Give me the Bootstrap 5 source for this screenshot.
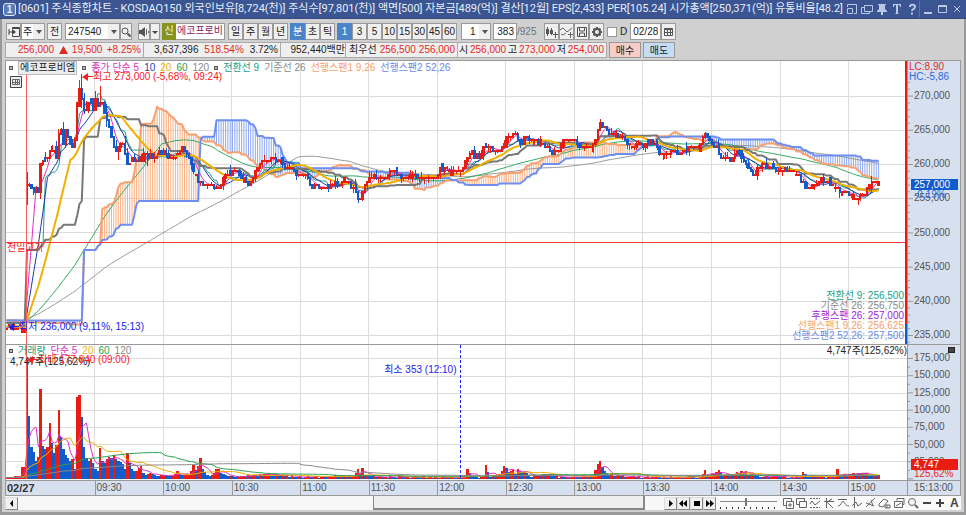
<!DOCTYPE html>
<html lang="ko">
<head>
<meta charset="utf-8">
<meta name="viewport" content="width=device-width, initial-scale=1">
<title>[0601] 주식종합차트</title>
<link rel="stylesheet" href="https://cdn.jsdelivr.net/npm/bootstrap@5.3.0/dist/css/bootstrap.min.css">
<style>
body{font:10px/14px "Liberation Sans","Noto Sans CJK KR",sans-serif;background:#d0d0d0;color:#222;min-height:480px}
button,input,select{font:inherit;color:inherit}
.titlebar{height:19px;background:#3a5592;color:#e8eefa;padding:0 2px 0 3px;gap:2px;border-bottom:1px solid #334a80}
.titlebar h1{font:11px/18px Roboto,"Noto Sans CJK KR",sans-serif;word-break:keep-all;min-width:0}
.logo{width:13px;height:13px;flex:none;border:1px solid #dfe8f8;border-radius:3px;background:#587cb8;font-weight:bold;line-height:11px}
.winbtn{border:0;background:none;width:15px;height:16px;padding:1px;color:#b9c8e4}
.frame{border:solid #999;border-width:0 2px 3px 2px;padding:4px 3px 2px;min-height:0}
.tools{height:17px;padding-left:1px}
.tb{border:1px solid #999;background:#efefef;height:17px;width:15px;padding:0;line-height:14px;text-align:center;flex:none}
.tb svg,.drw svg,.winbtn svg{display:block;margin:auto}
.tb.on{background:#4a83c8;border-color:#4a83c8;color:#fff}
.tb.sin{background:#84941c;border-color:#84941c;color:#fff;width:14px}
.fld{border:1px solid #999;background:#fff;height:17px;padding:0 2px;border-radius:0;flex:none}
.drop{appearance:none;background:#fff linear-gradient(#efefef,#efefef) right/11px 100% no-repeat;padding-right:10px}
.dropwrap{position:relative;flex:none;display:flex}
.dropwrap::after{content:"";position:absolute;right:3px;top:7px;border:3px solid transparent;border-top:4px solid #555;border-bottom:0;pointer-events:none}
.stock{width:49px;color:#8a1c62;white-space:nowrap}
.info{height:16px;margin-top:2px;margin-bottom:2px}
.cell{border:1px solid #aaa;border-left-width:0;background:#efefef;height:16px;line-height:14px;white-space:nowrap;flex:none}
.c1{width:139px;padding:0 2px 0 12px;border-left-width:1px}.c2{width:137px;padding:0 2px 0 10px}.c3{width:65px}.c4{width:112px;padding:0 2px 0 3px}.c5{width:149px;padding:0 2px 0 1px}
.up{color:#e4281c}
.ord{width:32px;height:16px;border:1px solid #999;padding:0;line-height:13px;margin-left:2px}
.buy{background:#f6cdc8}.sell{background:#c4dcf4}
.chart{border:1px solid #999;border-bottom:0;background:#fff;min-height:0}
.pane{min-height:0;flex-basis:0;display:flex}
.price{flex-grow:283}.volume{flex-grow:135;border-top:1px solid #999}
.plot{position:relative;flex:1 1 0;min-width:0;overflow:hidden}
.plot>svg,.scale>svg{position:absolute;left:0;top:0;width:100%;height:100%;display:block}
.scale{width:53px;flex:none;background:#d6e0ef;border-left:1px solid #999;position:relative;color:#555;display:flex;flex-direction:column;justify-content:space-between;line-height:12px;overflow:hidden}
.scale .lab{padding-left:6px;position:relative}
.price .scale{padding:29px 0 3px}.volume .scale{padding:7px 0 12px}
.note{position:absolute;white-space:nowrap;line-height:12px}
.legend{gap:5px;left:3px;top:0}
.bx{width:4px;height:4px;border:1px solid #555;background:#bbb;flex:none;display:inline-block}
.tag{background:#ececec;border:1px solid #bbb;line-height:12px;padding:0 1px}
.sums{right:3px;bottom:3px;line-height:10px;text-align:right}
.arw::before{content:"";display:inline-block;border:4px solid transparent;border-right:6px solid;border-left:0;vertical-align:-1px}
.arw i{display:inline-block;width:5px;height:1px;background:currentColor;vertical-align:3px}
.m{color:#e030c0}.n{color:#1c3ca8}.g{color:#e8b020}.gr{color:#28a050}.gy{color:#888}.te{color:#18a088}.or{color:#f8a068}.bl{color:#6888e8}.pu{color:#a020e0}.rd{color:#fa2020}.bb{color:#2020f0}.hc{color:#2868d8}
.times{display:flex;height:16px;flex:none;background:#d6e0ef;border-top:1px solid #999;border-bottom:1px solid #999;color:#555;line-height:14px}
.tgrid{display:grid;grid-template-columns:177fr repeat(11,137fr) 117fr;flex:1 1 0}
.tgrid span+span{border-left:1px solid #999;padding-left:1px}
.tgrid .day{font-size:11px;padding-left:1px;color:#333}
.now{width:53px;border-left:1px solid #999;padding-left:6px}
.foot{height:14px;flex:none;background:#fafafa}
.track{flex:1 1 0;height:14px;display:flex;background:#f7f7f7}
.thumb{margin-left:55%;width:42%;height:14px;background:#eee;border:solid #888;border-width:0 2px 2px 1px;padding:0}
.nav2{width:13px;height:13px;border:1px solid #888;border-color:#ddd #888 #888 #ddd;background:#f0f0f0;padding:0;flex:none;color:#000}
.nav2 svg{display:block;margin:auto}
.speed{appearance:none;width:57px;height:14px;margin:0 4px;background:linear-gradient(#888,#888) 0 5px/100% 1px no-repeat,repeating-linear-gradient(90deg,#333 0 1px,transparent 1px 6px) 0 11px/100% 2px no-repeat;flex:none}
.speed::-webkit-slider-thumb{appearance:none;width:2px;height:8px;background:#777;margin-top:-3px}
.draws{width:180px;flex:none}
.drw{border:0;background:none;padding:0;width:13px;height:14px;color:#666}
.drw.txt{font-size:12px;color:#444}
.mark-now{position:absolute;left:3px;right:2px;background:#105ccc;color:#fff;line-height:11px;padding-left:3px}
.mini{position:absolute;right:5px;top:2px;width:7px;height:6px;background:#444;border:1px solid #222;padding:0}
#kind{width:24px;padding-left:1px}#prev{margin-left:2px}#codebox{margin-left:3px}#code{width:55px}#find{width:12px}
#snd{margin-left:6px;width:12px}#sndo{width:10px;margin-right:2px}#nm{border-left:0;margin-right:3px;padding:0 1px}#min,#u1{margin-left:2px}#unit{width:30px}
#cnt{width:24px;margin-left:2px}#tot{width:27px;line-height:17px}#dl{gap:3px;margin:0 3px}#dchk{width:10px;height:10px;appearance:none}#date{width:31px}
#gridIcon{left:4px;top:15px;width:12px;height:12px}
#hi{left:76px;top:10px}#ph{left:1px;top:64%}#lo{left:2px;top:92%}
#v1{left:4px;top:11px}#vmax{left:21px;top:9px}#vmin{right:50%;top:19px}#v2{right:0;top:0}
#lc{left:1px;top:1px;line-height:10px}#cur{top:118px}#chg{left:6px;top:128px}
#vcur{background:#e81c10;top:114px;left:3px}#vchg{left:6px;top:123px}
</style>
<script src="https://cdn.jsdelivr.net/npm/bootstrap@5.3.0/dist/js/bootstrap.bundle.min.js"></script>
</head>
<body class="d-flex flex-column vh-100 overflow-hidden">
<header class="titlebar d-flex align-items-center flex-shrink-0">
  <span class="logo text-center">1</span>
  <h1 class="m-0 flex-grow-1 text-nowrap">[0601] 주식종합차트 - KOSDAQ150 외국인보유[8,724(천)] 주식수[97,801(천)] 액면[500] 자본금[489(억)] 결산[12월] EPS[2,433] PER[105.24] 시가총액[250,371(억)] 유통비율[48.2]</h1>
  <div class="d-flex flex-shrink-0">
    <button class="winbtn" aria-label="도킹"><svg width="12" height="12" fill="none" stroke="currentColor"><path d="M1.5 4V1.5h9v9H8M1.5 5.500h5v5h-5z"/></svg></button>
    <button class="winbtn" aria-label="복제"><svg width="12" height="12" fill="none" stroke="currentColor"><path d="M3.500 2.500h8v6h-8zM3 4.500H.5v6h8V9"/></svg></button>
    <button class="winbtn" aria-label="고정"><svg width="12" height="12" fill="currentColor"><path d="M2 1h8v1H9v4l2 2v1H1V8l2-2V2H2zM5 9h2v3H5z"/></svg></button>
    <button class="winbtn" aria-label="글꼴"><svg width="12" height="12" fill="currentColor"><path d="M2 1h8v3H9L8.500 2H7v8l1 1H4l1-1V2H3.500L3 4H2z"/></svg></button>
    <button class="winbtn fw-bold" aria-label="도움말"><svg width="12" height="12" fill="none" stroke="currentColor" stroke-width="2"><path d="M4 4c0-3 5-3 5 0 0 2-3 2-3 4M6 9.500v2"/></svg></button>
    <button class="winbtn border-start border-secondary" aria-label="최소화"><svg width="12" height="12" fill="currentColor"><path d="M3 9h8v2H3z"/></svg></button>
    <button class="winbtn" aria-label="최대화"><svg width="12" height="12" fill="none" stroke="currentColor"><path d="M2.500 2.500h8v7h-8zM2 3.500h9"/></svg></button>
    <button class="winbtn" aria-label="닫기"><svg width="12" height="12" fill="none" stroke="currentColor"><path d="M3 3l6 6M9 3l-6 6"/></svg></button>
  </div>
</header>
<main class="frame d-flex flex-column flex-grow-1">
  <div class="tools d-flex flex-shrink-0">
    <button class="tb" aria-label="패널"><svg width="12" height="12" fill="none" stroke="#444"><path d="M4.500 3V1.500h7v9h-7V9M4 2.500h8M1 3v6M1 6h4"/><path d="M4 3l4 3-4 3z" fill="#444" stroke="none"/></svg></button>
    <span class="dropwrap"><select class="fld drop" aria-label="종류" id="kind"><option>주</option></select></span>
    <button class="tb" id="prev">전</button>
    <span class="dropwrap" id="codebox"><input class="fld drop" aria-label="종목코드" value="247540" id="code"></span>
    <button class="tb" aria-label="검색" id="find"><svg width="10" height="12" fill="none" stroke="#555"><circle cx="4" cy="5" r="3"/><path d="M6.500 7.500l3 3" stroke-width="2"/></svg></button>
    <button class="tb" aria-label="소리" id="snd"><svg width="10" height="12" fill="#555"><path d="M0 4h2l4-3v10L2 8H0z"/><path d="M7.500 3v6M9.500 5v2" stroke="#666"/></svg></button>
    <button class="tb" aria-label="소리 옵션" id="sndo"><svg width="8" height="12" fill="#444"><path d="M1 5h6L4 8z"/></svg></button>
    <span class="tb sin">신</span>
    <span class="fld stock" id="nm">에코프로비</span>
    <button class="tb">일</button><button class="tb">주</button><button class="tb">월</button><button class="tb">년</button>
    <button class="tb on" id="min">분</button><button class="tb">초</button><button class="tb">틱</button>
    <button class="tb on" id="u1">1</button><button class="tb">3</button><button class="tb">5</button><button class="tb">10</button><button class="tb">15</button><button class="tb">30</button><button class="tb">45</button><button class="tb">60</button>
    <span class="dropwrap ms-1"><select class="fld drop ps-2" aria-label="분 단위" id="unit"><option>1</option></select></span>
    <input class="fld text-end" aria-label="표시 개수" value="383" id="cnt"><span class="text-secondary" id="tot">/925</span>
    <button class="tb" aria-label="봉 추가"><svg width="13" height="12" fill="#555"><path d="M1 3h3v5H1zM2 1h1v9H2zM5 4h3v4H5zM6 2h1v7H6zM10 6h1v2h2v1h-2v3h-1V9H8V8h2z"/></svg></button>
    <button class="tb" aria-label="지표 추가"><svg width="13" height="12" fill="none" stroke="#666"><path d="M0 4l3-2 4 4 5-4M1 8l2 1 3-2M10.500 6v6M8 8.500h5"/></svg></button>
    <button class="tb" aria-label="저장"><svg width="12" height="12" fill="none" stroke="#555"><path d="M1.500 1.500h9v9h-9zM3.500 2v3h5V2M3.500 10V7h5v3"/></svg></button>
    <button class="tb" aria-label="설정"><svg width="12" height="12" fill="none" stroke="#555"><circle cx="6" cy="6" r="3" stroke-width="2"/><path d="M6 1v2M6 9v2M1 6h2M9 6h2M2.500 2.500l1 1M8.500 8.500l1 1M2.500 9.500l1-1M8.500 3.500l1-1" stroke-width="2"/></svg></button>
    <label class="d-flex align-items-center" id="dl"><input type="checkbox" class="fld" id="dchk">D</label>
    <input class="fld" aria-label="날짜" value="02/28" id="date"><button class="tb" aria-label="달력"><svg width="11" height="12" fill="none" stroke="#555"><path d="M1.500 2.500h8v7h-8zM1 3.500h9M4.500 4v5M7.500 4v5M2 6.500h8"/></svg></button>
  </div>
  <div class="info d-flex flex-shrink-0">
    <div class="cell c1 d-flex justify-content-between up"><span>256,000</span><svg width="9" height="14" fill="#e4281c"><path d="M0 11h9L4.500 3z"/></svg><span>19,500</span><span>+8.25%</span></div>
    <div class="cell c2 d-flex justify-content-between"><span>3,637,396</span><span class="up">518.54%</span><span>3.72%</span></div>
    <div class="cell c3 text-end">952,440백만</div>
    <div class="cell c4 d-flex justify-content-between"><span>최우선</span><span class="up">256,500</span><span class="up">256,000</span></div>
    <div class="cell c5 d-flex justify-content-between"><span>시</span><span class="up">256,000</span><span>고</span><span class="up">273,000</span><span>저</span><span class="up">254,000</span></div>
    <button class="ord buy">매수</button><button class="ord sell">매도</button>
  </div>
  <section class="chart d-flex flex-column flex-grow-1">
    <div class="pane price">
      <div class="plot">
        <svg id="priceSvg" viewBox="6 61 901 283" preserveAspectRatio="none" aria-label="가격 차트"></svg>
        <div class="note legend d-flex align-items-center"><i class="bx"></i><span class="tag">에코프로비엠</span><i class="bx"></i><span class="m">종가 단순 5</span><span class="n">10</span><span class="g">20</span><span class="gr">60</span><span class="gy">120</span><i class="bx"></i><span class="te">전환선 9</span><span class="gy">기준선 26</span><span class="or">선행스팬1 9,26</span><span class="bl">선행스팬2 52,26</span></div>
        <svg class="note" id="gridIcon" viewBox="0 0 12 12"><path d="M.5.5h11v11H.5z" fill="#eee" stroke="#444"/><path d="M2.500 3.500h7v5h-7zM5.500 3v6M7.500 3v6M2 6.500h8" fill="none" stroke="#666"/></svg>
        <div class="note arw rd" id="hi"><i></i>최고 273,000 (-5,68%, 09:24)</div>
        <div class="note rd" id="ph">전일고가</div>
        <div class="note arw bb" id="lo"><i></i>최저 236,000 (9,11%, 15:13)</div>
        <div class="note sums"><div class="te">전환선 9: 256,500</div><div class="gy">기준선 26: 256,750</div><div class="pu">후행스팬 26: 257,000</div><div class="or">선행스팬1 9,26: 256,625</div><div class="bl">선행스팬2 52,26: 257,500</div></div>
      </div>
      <div class="scale"><svg id="pt" viewBox="0 61 52 283" preserveAspectRatio="none"></svg>
        <div class="note" id="lc"><div class="up">LC:8,90</div><div class="hc">HC:-5,86</div></div>
        <span class="lab">270,000</span><span class="lab">265,000</span><span class="lab">260,000</span><span class="lab">255,000</span><span class="lab">250,000</span><span class="lab">245,000</span><span class="lab">240,000</span><span class="lab">235,000</span>
        <div class="mark-now" id="cur">257,000</div><div class="note hc" id="chg">-0,19%</div>
      </div>
    </div>
    <div class="pane volume">
      <div class="plot">
        <svg id="volSvg" viewBox="6 345 901 135" preserveAspectRatio="none" aria-label="거래량 차트"></svg>
        <div class="note legend d-flex align-items-center"><i class="bx"></i><span class="te">거래량</span><span class="m">단순 5</span><span class="g">20</span><span class="gr">60</span><span class="gy">120</span></div>
        <div class="note" id="v1">4,747주(125,62%)</div>
        <div class="note arw rd" id="vmax"><i></i>최대 177,840 (09:00)</div>
        <div class="note bb" id="vmin">최소 353 (12:10)</div>
        <div class="note" id="v2">4,747주(125,62%)</div>
      </div>
      <div class="scale"><svg id="vt" viewBox="0 345 52 135" preserveAspectRatio="none"></svg>
        <button class="mini" aria-label="창 메뉴"></button>
        <span class="lab">175,000</span><span class="lab">150,000</span><span class="lab">125,000</span><span class="lab">100,000</span><span class="lab">75,000</span><span class="lab">50,000</span><span class="lab">25,000</span>
        <div class="mark-now" id="vcur">4,747</div><div class="note up" id="vchg">125,62%</div>
      </div>
    </div>
    <div class="times"><div class="tgrid"><span class="day fw-bold">02/27</span><span>09:30</span><span>10:00</span><span>10:30</span><span>11:00</span><span>11:30</span><span>12:00</span><span>12:30</span><span>13:00</span><span>13:30</span><span>14:00</span><span>14:30</span><span>15:00</span></div><div class="now">15:13:00</div></div>
  </section>
  <footer class="foot d-flex align-items-center">
    <button class="nav2" aria-label="이전"><svg width="9" height="9"><path d="M6 1v7L3 4.500z"/></svg></button>
    <div class="track"><button class="thumb" aria-label="스크롤"></button></div>
    <button class="nav2" aria-label="다음"><svg width="9" height="9"><path d="M3 1v7l4-3.500z"/></svg></button>
    <button class="nav2" aria-label="되감기"><svg width="9" height="9"><path d="M4 1v7L0 4.500zM8 1v7L4 4.500z"/></svg></button>
    <button class="nav2" aria-label="정지"><svg width="9" height="9"><path d="M2 2h6v5H2z"/></svg></button>
    <button class="nav2" aria-label="빨리감기"><svg width="9" height="9"><path d="M1 1v7l4-3.500zM5 1v7l4-3.500z"/></svg></button>
    <input type="range" class="speed" aria-label="속도" value="45">
    <div class="draws d-flex justify-content-between">
      <button class="drw" aria-label="영역 추가"><svg width="12" height="12" fill="none" stroke="currentColor"><path d="M4 8.500H1.500v-7h8V4M4.500 4.500h7v7h-7zM6 8h4M8 6v4"/></svg></button>
      <button class="drw" aria-label="창 복사"><svg width="12" height="12" fill="none" stroke="currentColor"><path d="M4 7.500H1.500v-6h8V4M4.500 4.500h7v6h-7z"/></svg></button>
      <button class="drw" aria-label="지표"><svg width="12" height="12" fill="none" stroke="currentColor"><path d="M1 1.500h10M1 10.500h10" stroke-dasharray="2 1"/><path d="M1 7l2-3 3 4 5-4"/></svg></button>
      <button class="drw" aria-label="좌측선"><svg width="12" height="12" fill="none" stroke="currentColor"><path d="M3.500 1v10M1 4.500h10M4 5l5-3M4 5l6 6"/></svg></button>
      <button class="drw" aria-label="수평선"><svg width="12" height="12" fill="none" stroke="currentColor"><path d="M1 2.500h9M1 9c3 0 4-5 5-5s2 5 6 5"/></svg></button>
      <button class="drw" aria-label="수직선"><svg width="12" height="12" fill="none" stroke="currentColor"><path d="M3.500 0v11M1 9l4-4 2 4 4-3"/></svg></button>
      <button class="drw" aria-label="추세선"><svg width="12" height="12" fill="none" stroke="currentColor"><path d="M1 10L10 1M1 6l8 3M6 3l2 6"/></svg></button>
      <button class="drw" aria-label="지우개"><svg width="13" height="12" fill="none" stroke="currentColor"><path d="M1 7l5-5 4 2-5 6-4-1zM7 8h5v3H7zM9 8v3"/></svg></button>
      <button class="drw" aria-label="모두 지우기"><svg width="12" height="12" fill="none" stroke="currentColor"><path d="M4 3.500V1.500h7v6H9M1.500 4.500h8v6h-8zM3 9l5-3"/></svg></button>
      <button class="drw" aria-label="돋보기"><svg width="12" height="12" fill="none" stroke="currentColor"><circle cx="5" cy="5" r="3.500"/><path d="M8 8l3 3" stroke-width="2"/></svg></button>
      <button class="drw" aria-label="축소"><svg width="12" height="12" stroke="#444" stroke-width="2"><path d="M2 6h8"/></svg></button>
      <button class="drw" aria-label="확대"><svg width="12" height="12" stroke="#444" stroke-width="2"><path d="M2 6h8M6 2v8"/></svg></button>
      <button class="drw txt fw-bold">A</button>
    </div>
  </footer>
</main>
<script>
const X0=27, DX=2.283, N=374, Q=3.42, LAG=25;
// closing price of the session as "x:y" knots
const knots="27:183 30:186 33:190 36:188 39:195 41:156 44:163 47:160 50:150 53:146 57:157 60:121 63:145 66:127 69:140 72:147 76:136 78:82 81:97 84:108 87:112 90:99 93:108 96:99 99:109 101:97 104:112 108:124 112:140 115:150 118:145 122:142 125:153 128:166 132:157 136:163 140:162 143:152 147:157 151:154 155:158 160:153 165:151 170:157 175:156 180:150 185:149 188:156 192:165 195:173 200:182 205:186 210:184 215:186 218:189 222:180 228:174 234:168 239:175 243:178 248:186 252:180 256:172 261:163 266:160 270:160 273:157 278:160 282:163 287:168 292:168 298:175 305:172 308:177 311:186 317:187 325:187 330:187 335:182 340:184 345:179 350:186 355:190 358:198 362:195 365:183 370:179 375:176 380:178 383:180 388:172 392:172 397:175 403:177 412:176 422:178 432:177 437:177 440:170 446:169 455:170 462:170 467:158 471:152 475:157 480:155 487:145 491:150 497:153 501:148 507:135 511:138 515:132 519:143 522:146 525:135 530:140 537:140 543:145 547:149 550:153 556:152 561:145 567:141 575:141 580:148 587:147 594:143 597:135 600:122 603:126 607:130 612:135 617:136 622:136 628:142 632:147 638:144 645:147 650:142 656:146 661:155 667:154 673:150 680:153 685:151 690:146 700:146 705:134 710:142 717:149 721:160 727:159 732:158 737:151 743:158 749:168 754:175 758:168 763:165 770:168 779:172 785:169 790:172 793:168 798:175 803:183 807:190 813:186 818:186 820:178 825:181 832:185 840:191 848:194 855:196 863:195 868:188 872:180 876:181 882:183".split(" ").map(s=>s.split(":").map(Number));
// volume bar tops, same notation
const vols="27:360 29:412 32:453 34:452 36:461 39:456 41:377 43:447 45:448 47:453 50:421 53:452 56:455 59:409 61:436 64:452 67:457 70:461 73:459 75:469 77:397 80:395 82:420 84:447 86:457 88:461 91:459 93:462 96:470 98:471 100:448 103:465 106:462 108:455 111:459 114:455 117:461 120:462 123:464 125:471 127:451 130:464 133:471 137:471 141:465 144:475 151:473 158:476 165:475 172:476 175:475 178:471 181:475 190:474 194:464 197:473 200:455 203:470 208:476 213:475 218:467 222:475 240:477 265:474 300:477 355:476 357:465 360:475 362:467 365:475 380:477 465:477 468:469 470:474 480:477 485:476 486:465 489:476 500:474 505:464 508:473 513:469 515:475 517:470 525:472 530:476 547:474 560:477 594:476 597:465 600:460 603:468 608:475 640:477 702:477 704:467 708:476 720:470 723:476 746:471 749:476 753:473 760:477 801:477 803:471 807:477 835:477 837:468 840:476 867:472 870:476 882:476".split(" ").map(s=>s.split(":").map(Number));
let seed=7; const rnd=()=>(seed=(seed*16807)%2147483647)/2147483647;
const at=(k,x)=>{let i=1;while(i<k.length-1&&k[i][0]<x)i++;const a=k[i-1],b=k[i];const t=Math.max(0,Math.min(1,(x-a[0])/(b[0]-a[0])));return a[1]+(b[1]-a[1])*t};
const snap=y=>Math.round((y-96)/Q)*Q+96;
const PRE=130, bars=[];
for(let i=-PRE;i<N;i++){
  const x=X0+i*DX; let c,o,h,l;
  if(i<0){c=i<-40?317:snap(325+rnd()*3);o=snap(c+(rnd()-.5)*6);if(i<-40)o=c;h=Math.min(o,c)-(i<-12?4:1);l=Math.min(328,Math.max(o,c)+1)}
  else{c=snap(at(knots,x)+(rnd()-.5)*3);o=i?bars[bars.length-1].c:192;
    if(rnd()<.25)o=snap(o+(rnd()-.5)*6);
    const w=x<150?10:6;h=Math.min(o,c)-(rnd()<.5?rnd()*w:0);l=Math.max(o,c)+(rnd()<.5?rnd()*w:0);
    if(i==0){h=172;l=205} if(i==24)h=74; if(i==32)h=86}
  const v=i<0?(i>-3?12:i>-6?3:1.500):479-Math.min(478,at(vols,x)+(x>220?(rnd()-.5)*2:0));
  bars.push({x,o,c,h,l,v});
}
const ma=(k,f)=>bars.map((b,i)=>{if(i<k-1)return f(b);let s=0;for(let j=0;j<k;j++)s+=f(bars[i-j]);return s/k});
const mid=k=>bars.map((b,i)=>{let h=1e9,l=0;for(let j=Math.max(0,i-k+1);j<=i;j++){h=Math.min(h,bars[j].h);l=Math.max(l,bars[j].l)}return(h+l)/2});
const conv=mid(9),base=mid(26),m52=mid(52);
const shift=a=>a.map((_,i)=>a[Math.max(0,i-LAG)]);
const A=shift(conv.map((v,i)=>(v+base[i])/2)),B=shift(m52);
const line=(a,col,w=1)=>`<path d="M${a.map((v,i)=>[i,v]).filter(p=>bars[p[0]].x>=5).map(p=>bars[p[0]].x.toFixed(1)+" "+p[1].toFixed(1)).join("L")}" fill="none" stroke="${col}" stroke-width="${w}" stroke-linejoin="round"/>`;
const seg=(x1,y1,x2,y2,c,w=1,e="")=>`<path d="M${x1} ${y1}L${x2} ${y2}" stroke="${c}" stroke-width="${w}" ${e}/>`;
let grid="";for(let i=0;i<12;i++)grid+=seg(Math.round(94+i*68.55)+.5,0,Math.round(94+i*68.55)+.5,500,"#dcdcdc");
let s=grid;
for(let i=0;i<8;i++)s+=seg(5,Math.round(95.500+i*34.2)+.5,907,Math.round(95.500+i*34.2)+.5,"#dcdcdc");
bars.forEach((b,i)=>{if(b.x>=5&&Math.abs(A[i]-B[i])>1)s+=seg(b.x.toFixed(1),A[i],b.x.toFixed(1),B[i],A[i]<B[i]?"#f9b183":"#8ea8f2",1)});
s+=line(ma(120,b=>b.c),"#999")+line(ma(60,b=>b.c),"#30a860")+line(A,"#f8a070",2)+line(B,"#6f8ff0",2)+line(conv,"#20a090")+line(ma(10,b=>b.c),"#2038a8")+line(ma(5,b=>b.c),"#e030c0")+line(base,"#777",2)+line(ma(20,b=>b.c),"#f0b000",2);
s+=`<g shape-rendering="crispEdges">`;
bars.forEach(b=>{if(b.x<5)return;const c=b.c<=b.o?"#e81c10":"#105ccc";s+=`<rect x="${b.x-.5}" y="${b.h}" width="1" height="${b.l-b.h}" fill="${c}"/><rect x="${b.x-1.2}" y="${Math.min(b.o,b.c)-1}" width="2.4" height="${Math.abs(b.o-b.c)+2}" fill="${c}"/>`});
s+=`</g>`+seg(5,242.5,907,242.5,"#ff3c3c")+seg(26.5,61,26.5,344,"#ff5a5a")+seg(906,61,906,324,"#e81c10",2)+seg(906,324,906,344,"#105ccc",2);
document.getElementById("priceSvg").innerHTML=s;
let v=grid;[358,376,393,410,427,444,461].forEach(y=>v+=seg(5,y+.5,907,y+.5,"#dcdcdc"));
v+=`<g shape-rendering="crispEdges">`;
bars.forEach((b,i)=>{if(b.x<5)return;const c=b.v>=bars[i-1].v?"#e81c10":"#105ccc";v+=`<rect x="${b.x-1.2}" y="${479-b.v}" width="2.4" height="${b.v}" fill="${c}"/>`});
v+=`</g>`;
[[5,"#e030c0"],[20,"#f0b000"],[60,"#28a050"],[120,"#888"]].forEach(p=>v+=line(ma(p[0],b=>b.v).map(q=>479-q),p[1]));
v+=seg(26.5,345,26.5,479,"#ff5a5a")+seg(460.5,345,460.5,479,"#2020f0",1,'stroke-dasharray="3 2"');
document.getElementById("volSvg").innerHTML=v;
let t="";for(let y=82.4,i=0;y<344;y+=6.84,i++)t+=seg(0,y.toFixed(1),(i-2)%5?2:5,y.toFixed(1),"#999");document.getElementById("pt").innerHTML=t;
t="";for(let y=358.5,i=0;y<480;y+=8.6,i++)t+=seg(0,y.toFixed(1),i%2?2:5,y.toFixed(1),"#999");document.getElementById("vt").innerHTML=t;
</script>
</body>
</html>
